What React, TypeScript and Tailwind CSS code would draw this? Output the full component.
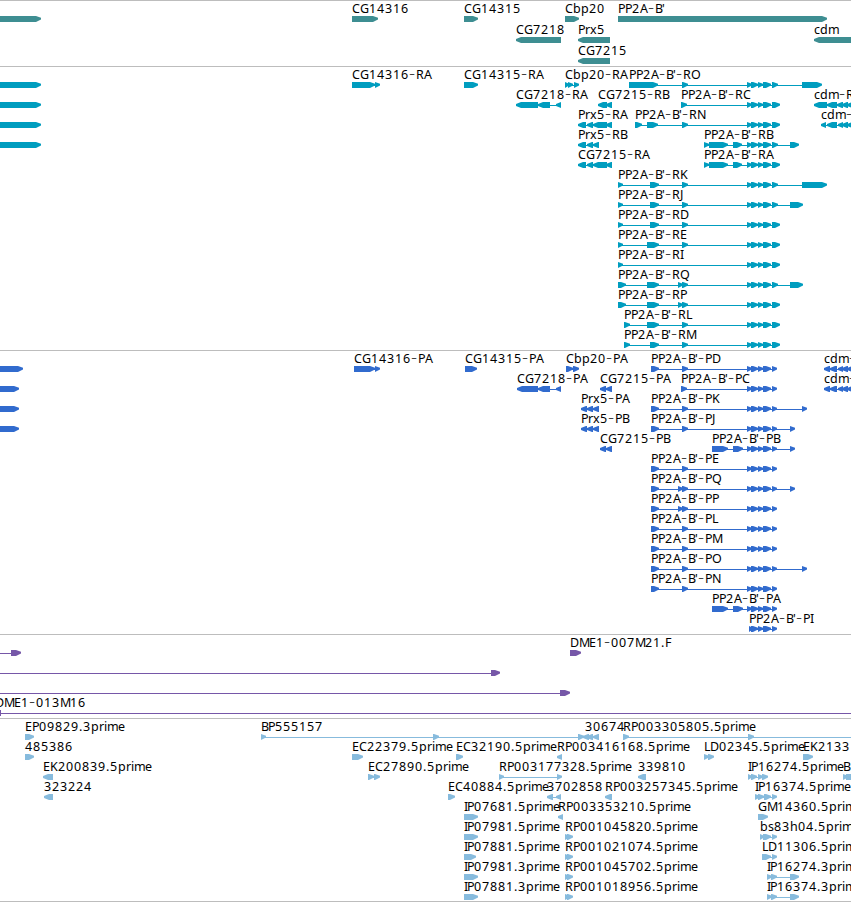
type Span = [number, number];

type Feature = {
  label?: string;
  x: number;
  y: number;
  spans: Span[];
  reverse?: boolean;
  lineFrom?: number;
  lineTo?: number;
};

type TrackData = {
  name: string;
  top: number;
  height: number;
  color: string;
  features: Feature[];
};

// Advance of each glyph in the label font, in pixels
const ADVANCE: Record<string, number> = {
  A: 8, B: 7, C: 8, D: 9, E: 7, F: 7, G: 9, I: 3, J: 4, K: 8, L: 6, M: 10,
  N: 9, O: 9, P: 7, Q: 9, R: 8, b: 8, c: 6, d: 8, e: 7, h: 8, i: 3, m: 11,
  p: 8, r: 5, s: 6, x: 7, "-": 7, "'": 3, ".": 4,
};

const fwd = (label: string, x: number, y: number, spans: Span[]): Feature => ({
  label,
  x,
  y,
  spans,
});

const rev = (label: string, x: number, y: number, spans: Span[]): Feature => ({
  label,
  x,
  y,
  spans,
  reverse: true,
});

const left = (y: number, end: number): Feature => ({
  x: -20,
  y,
  spans: [[-20, end]],
});

// Exons shared by all PP2A-B' transcripts
const CORE: Span[] = [[747, 752], [751, 758], [758, 763], [763, 771]];
const SHORT: Span[] = [...CORE, [772, 778]];
const LONG: Span[] = [...CORE, [772, 780]];
const CDS: Span[] = [...CORE, [772, 777]];

const TRACKS: TrackData[] = [
  {
    name: "genes",
    top: 0,
    height: 66,
    color: "#3e8e92",
    features: [
      left(16, 41),
      fwd("CG14316", 352, 16, [[352, 378]]),
      fwd("CG14315", 464, 16, [[464, 478]]),
      fwd("Cbp20", 565, 16, [[565, 579]]),
      fwd("PP2A-B'", 618, 16, [[618, 827]]),
      rev("CG7218", 516, 37, [[516, 561]]),
      rev("Prx5", 578, 37, [[578, 610]]),
      rev("cdm", 814, 37, [[814, 870]]),
      rev("CG7215", 578, 58, [[578, 610]]),
    ],
  },
  {
    name: "transcripts",
    top: 66,
    height: 284,
    color: "#009dbf",
    features: [
      left(82, 41),
      left(102, 41),
      left(122, 41),
      left(142, 41),
      fwd("CG14316-RA", 352, 82, [[352, 375], [375, 380]]),
      fwd("CG14315-RA", 464, 82, [[464, 478]]),
      fwd("Cbp20-RA", 565, 82, [[565, 569], [568, 573], [574, 579]]),
      fwd("PP2A-B'-RO", 629, 82, [[629, 658], [682, 688], ...SHORT, [802, 822]]),
      rev("CG7218-RA", 516, 102, [[516, 538], [538, 550], [556, 561]]),
      rev("CG7215-RB", 598, 102, [[598, 607], [606, 612]]),
      fwd("PP2A-B'-RC", 681, 102, [[681, 687], ...LONG]),
      rev("cdm-R", 814, 102, [[814, 827], [827, 837], [837, 843], [842, 848], [847, 856]]),
      rev("Prx5-RA", 578, 122, [[578, 586], [587, 593], [593, 607], [606, 612]]),
      fwd("PP2A-B'-RN", 635, 122, [[635, 642], [647, 658], [682, 688], ...LONG]),
      rev("cdm-", 821, 122, [[821, 826], [827, 837], [838, 843], [842, 848], [847, 856]]),
      rev("Prx5-RB", 578, 142, [[578, 586], [587, 593], [593, 599]]),
      fwd("PP2A-B'-RB", 704, 142, [[704, 709], [709, 728], [733, 742], ...SHORT, [790, 799]]),
      rev("CG7215-RA", 578, 162, [[578, 586], [587, 593], [593, 607], [606, 612]]),
      fwd("PP2A-B'-RA", 704, 162, [[704, 709], [709, 728], [733, 742], ...LONG]),
      fwd("PP2A-B'-RK", 618, 182, [[618, 623], [650, 659], [682, 688], ...SHORT, [802, 827]]),
      fwd("PP2A-B'-RJ", 618, 202, [[618, 623], [650, 659], [682, 688], ...SHORT, [790, 803]]),
      fwd("PP2A-B'-RD", 618, 222, [[618, 623], [650, 659], [682, 688], ...LONG]),
      fwd("PP2A-B'-RE", 618, 242, [[618, 623], [647, 659], [682, 688], ...LONG]),
      fwd("PP2A-B'-RI", 618, 262, [[618, 623], ...LONG]),
      fwd("PP2A-B'-RQ", 618, 282, [[618, 626], [647, 659], [678, 683], [682, 688], ...SHORT, [790, 803]]),
      fwd("PP2A-B'-RP", 618, 302, [[618, 626], [647, 659], [678, 683], [682, 688], ...LONG]),
      fwd("PP2A-B'-RL", 624, 322, [[624, 630], [647, 659], [682, 688], ...LONG]),
      fwd("PP2A-B'-RM", 624, 342, [[624, 630], [650, 659], [682, 688], ...LONG]),
    ],
  },
  {
    name: "proteins",
    top: 350,
    height: 284,
    color: "#316bce",
    features: [
      left(366, 23),
      left(386, 19),
      left(406, 19),
      left(426, 19),
      fwd("CG14316-PA", 354, 366, [[354, 375], [375, 380]]),
      fwd("CG14315-PA", 465, 366, [[465, 477]]),
      fwd("Cbp20-PA", 566, 366, [[566, 573], [573, 579]]),
      fwd("PP2A-B'-PD", 651, 366, [[651, 659], [682, 688], ...CDS]),
      rev("cdm-", 824, 366, [[824, 830], [830, 837], [838, 843], [842, 848], [847, 856]]),
      rev("CG7218-PA", 517, 386, [[517, 538], [538, 550], [556, 561]]),
      rev("CG7215-PA", 600, 386, [[600, 606], [606, 612]]),
      fwd("PP2A-B'-PC", 681, 386, [[681, 687], ...CDS]),
      rev("cdm-", 824, 386, [[824, 830], [830, 837], [838, 843], [842, 848], [847, 856]]),
      rev("Prx5-PA", 581, 406, [[581, 587], [587, 593], [593, 599]]),
      fwd("PP2A-B'-PK", 651, 406, [[651, 659], [682, 688], ...CDS, [802, 807]]),
      rev("Prx5-PB", 581, 426, [[581, 587], [587, 593], [593, 599]]),
      fwd("PP2A-B'-PJ", 651, 426, [[651, 659], [682, 688], ...CDS, [790, 795]]),
      rev("CG7215-PB", 600, 446, [[600, 606], [606, 612]]),
      fwd("PP2A-B'-PB", 712, 446, [[712, 728], [733, 743], ...CDS, [790, 795]]),
      fwd("PP2A-B'-PE", 651, 466, [[651, 659], [682, 688], ...CDS]),
      fwd("PP2A-B'-PQ", 651, 486, [[651, 659], [678, 683], [682, 688], ...CDS, [790, 795]]),
      fwd("PP2A-B'-PP", 651, 506, [[651, 659], [678, 683], [682, 688], ...CDS]),
      fwd("PP2A-B'-PL", 651, 526, [[651, 659], [682, 688], ...CDS]),
      fwd("PP2A-B'-PM", 651, 546, [[651, 659], [682, 688], ...CDS]),
      fwd("PP2A-B'-PO", 651, 566, [[651, 659], [682, 688], ...CDS, [802, 807]]),
      fwd("PP2A-B'-PN", 651, 586, [[651, 659], [682, 688], ...CDS]),
      fwd("PP2A-B'-PA", 712, 606, [[712, 728], [733, 743], ...CDS]),
      fwd("PP2A-B'-PI", 749, 626, [[749, 753], ...CDS.slice(1)]),
    ],
  },
  {
    name: "bacs",
    top: 634,
    height: 84,
    color: "#7657a8",
    features: [
      { x: 0, y: 650, spans: [[11, 21]], lineFrom: -10 },
      fwd("DME1-007M21.F", 570, 650, [[570, 581]]),
      { x: 0, y: 670, spans: [[491, 500]], lineFrom: -10 },
      { x: 0, y: 690, spans: [[560, 570]], lineFrom: -10 },
      { ...rev("DME1-013M16", -5, 710, [[-12, 1]]), lineTo: 860 },
    ],
  },
  {
    name: "ests",
    top: 718,
    height: 183,
    color: "#87bbdd",
    features: [
      fwd("EP09829.3prime", 25, 734, [[25, 34]]),
      fwd("BP555157", 261, 734, [[261, 266], [433, 439], [578, 584]]),
      rev("30674", 585, 734, [[583, 589], [587, 593], [593, 599]]),
      { ...fwd("RP003305805.5prime", 623, 734, [[623, 629], [748, 754]]), lineTo: 860 },
      fwd("485386", 25, 754, [[25, 34]]),
      fwd("EC22379.5prime", 352, 754, [[352, 363]]),
      fwd("EC32190.5prime", 456, 754, [[456, 463]]),
      rev("RP003416168.5prime", 557, 754, [[557, 562]]),
      fwd("LD02345.5prime", 704, 754, [[704, 709], [708, 714]]),
      fwd("EK2133", 803, 754, [[803, 813]]),
      rev("EK200839.5prime", 43, 774, [[43, 53]]),
      fwd("EC27890.5prime", 368, 774, [[368, 374], [374, 380]]),
      fwd("RP003177328.5prime", 499, 774, [[499, 504], [557, 562]]),
      rev("339810", 638, 774, [[638, 646]]),
      fwd("IP16274.5prime", 748, 774, [[748, 752], [751, 757], [758, 763], [762, 768]]),
      fwd("B", 843, 774, [[843, 848], [846, 860]]),
      rev("323224", 44, 794, [[44, 53]]),
      fwd("EC40884.5prime", 448, 794, [[448, 455]]),
      rev("3702858", 547, 794, [[547, 553], [556, 561]]),
      rev("RP003257345.5prime", 605, 794, [[605, 612]]),
      fwd("IP16374.5prime", 755, 794, [[755, 760], [758, 764], [764, 771], [772, 777]]),
      fwd("IP07681.5prime", 464, 814, [[464, 478]]),
      rev("RP003353210.5prime", 558, 814, [[558, 563]]),
      fwd("GM14360.5prime", 758, 814, [[758, 768]]),
      fwd("IP07981.5prime", 464, 834, [[464, 478]]),
      fwd("RP001045820.5prime", 565, 834, [[565, 570], [567, 573]]),
      fwd("bs83h04.5prime", 760, 834, [[760, 764], [763, 771], [772, 777]]),
      fwd("IP07881.5prime", 464, 854, [[464, 476]]),
      fwd("RP001021074.5prime", 565, 854, [[565, 570], [567, 573]]),
      fwd("LD11306.5prime", 762, 854, [[762, 771], [772, 777]]),
      fwd("IP07981.3prime", 464, 874, [[464, 478]]),
      fwd("RP001045702.5prime", 565, 874, [[565, 570], [567, 573]]),
      fwd("IP16274.3prime", 767, 874, [[767, 772], [771, 777], [790, 799]]),
      fwd("IP07881.3prime", 464, 894, [[464, 478]]),
      fwd("RP001018956.5prime", 565, 894, [[565, 570], [567, 573]]),
      fwd("IP16374.3prime", 767, 894, [[767, 772], [771, 777], [790, 799]]),
    ],
  },
];

function glyphPositions(label: string, x: number) {
  let pos = x;
  return label
    .split("")
    .map((ch) => {
      const at = pos;
      pos += ADVANCE[ch] ?? 8;
      return at;
    })
    .join(" ");
}

function arrowPoints([start, end]: Span, y: number, reverse?: boolean) {
  const head = Math.min(5, end - start);
  if (reverse) {
    return `${end},${y} ${start + head},${y} ${start},${y + 2} ${start},${y + 4} ${start + head},${y + 6} ${end},${y + 6}`;
  }
  return `${start},${y} ${end - head},${y} ${end},${y + 1.8} ${end},${y + 3.6} ${end - head},${y + 6} ${start},${y + 6}`;
}

function FeatureGlyph({ feature }: { feature: Feature }) {
  const { label, x, y, spans, reverse } = feature;
  const from = feature.lineFrom ?? spans[0][0];
  const to = feature.lineTo ?? spans[spans.length - 1][1] - 1;

  return (
    <g>
      <rect x={from} y={y + 3} width={to - from} height={1} />
      {spans.map((span, i) => (
        <polygon key={i} points={arrowPoints(span, y, reverse)} />
      ))}
      {label && (
        <text x={glyphPositions(label, x)} y={y - 3} fill="#000">
          {label.split(/(-)/).map((part, i) =>
            part === "-" ? (
              <tspan key={i} className="font-['DejaVu_Sans',sans-serif] text-[17px] font-extralight">
                -
              </tspan>
            ) : (
              part
            ),
          )}
        </text>
      )}
    </g>
  );
}

function Track({ track }: { track: TrackData }) {
  return (
    <section className="border-t border-[#bdbdbd]">
      <svg
        className="block w-full overflow-visible"
        height={track.height - 1}
        viewBox={`0 ${track.top + 1} 851 ${track.height - 1}`}
        fill={track.color}
      >
        {track.features.map((feature, i) => (
          <FeatureGlyph key={i} feature={feature} />
        ))}
      </svg>
    </section>
  );
}

export default function App() {
  return (
    <main className="w-[851px] overflow-hidden border-b border-[#bdbdbd] bg-white font-['Noto_Sans','DejaVu_Sans',sans-serif] text-[12.5px]">
      {TRACKS.map((track) => (
        <Track key={track.name} track={track} />
      ))}
    </main>
  );
}
